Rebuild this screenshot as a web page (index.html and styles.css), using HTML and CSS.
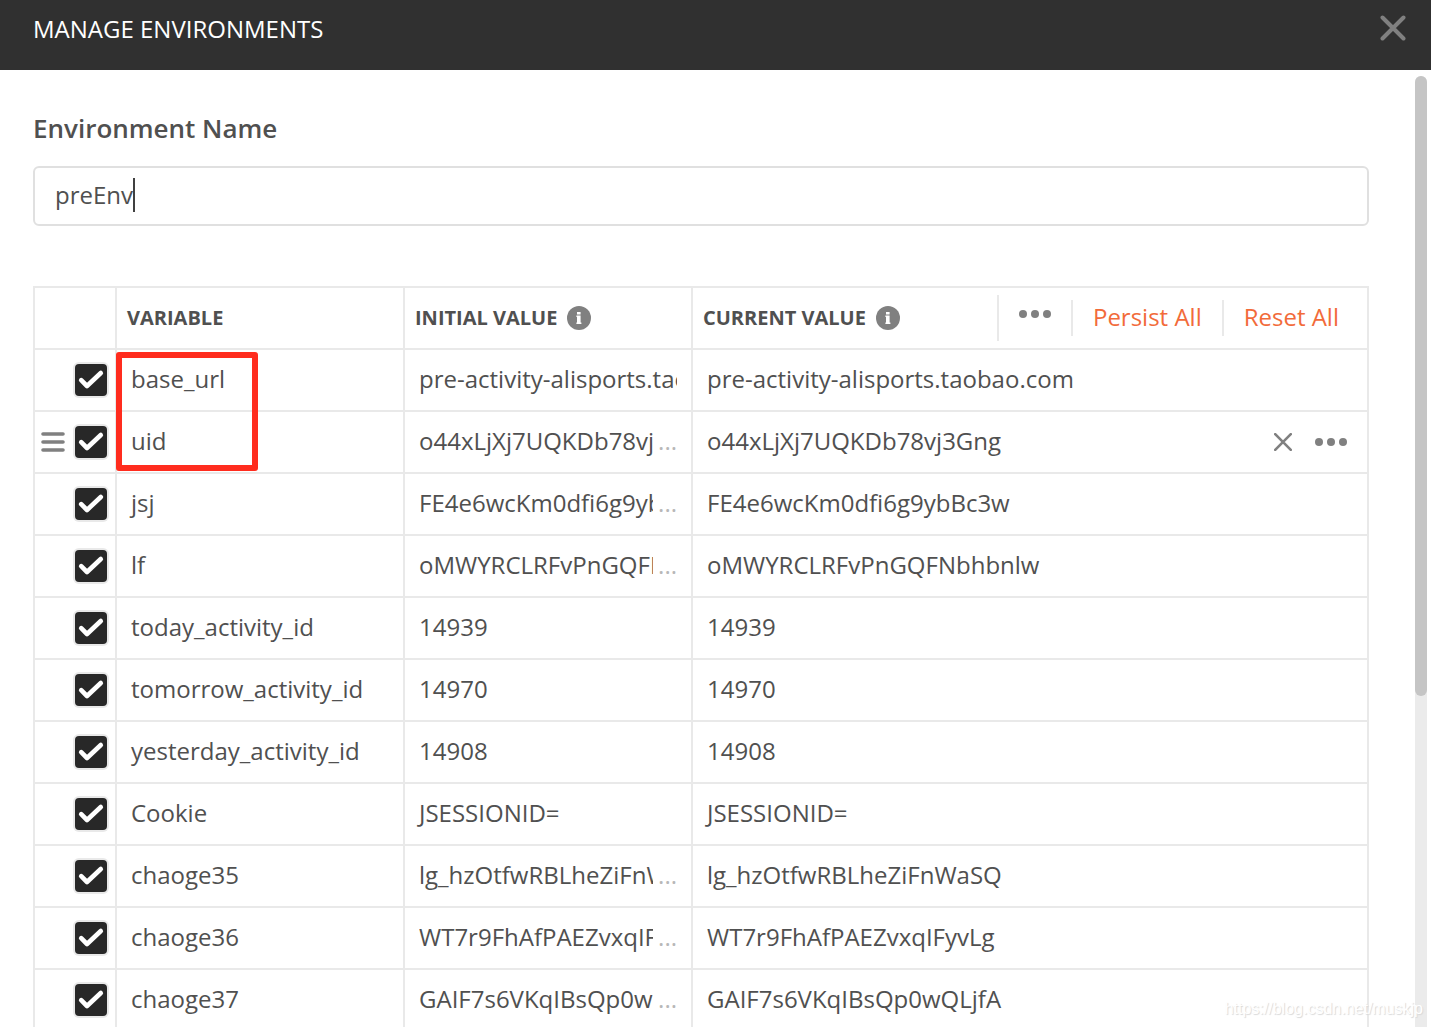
FILE: index.html
```html
<!DOCTYPE html>
<html lang="en">
<head>
<meta charset="utf-8">
<meta name="viewport" content="width=device-width, initial-scale=1">
<title>Manage Environments</title>
<link rel="stylesheet" href="styles.css">
</head>
<body>
<svg class="sprite" aria-hidden="true">
  <symbol id="info" viewBox="0 0 24 24"><circle cx="12" cy="12" r="12" fill="#808080"/><path d="M10 9.5h3.6v8.5h-3.6z M10 6h3.6v2.4h-3.6z M9.4 9.5h2v1.6h-2z M9.4 16.6h5v1.4h-5z" fill="#fff"/></symbol>
  <symbol id="dots" viewBox="0 0 32 8"><circle cx="4" cy="4" r="4"/><circle cx="16" cy="4" r="4"/><circle cx="28" cy="4" r="4"/></symbol>
</svg>
<main class="dialog">
  <header class="dialog-header">
    <h1 class="dialog-title">MANAGE ENVIRONMENTS</h1>
    <button class="icon-button" type="button" aria-label="Close">
      <svg width="26" height="26" viewBox="0 0 26 26" class="stroke-icon"><path d="M2.5 2.5l21 21M23.5 2.5l-21 21" stroke-width="4"/></svg>
    </button>
  </header>
  <div class="dialog-body">
    <div class="content">
      <label class="field-label" for="env-name">Environment Name</label>
      <div class="field">
        <input class="field-input" id="env-name" type="text" value="preEnv">
        <span class="caret"></span>
      </div>
      <div class="table-wrap">
        <table class="variables">
          <colgroup><col class="col-select"><col class="col-value"><col class="col-value"><col></colgroup>
          <thead>
            <tr>
              <th></th>
              <th scope="col">VARIABLE</th>
              <th scope="col"><div class="heading">INITIAL VALUE <svg class="info"><use href="#info"/></svg></div></th>
              <th scope="col">
                <div class="heading">CURRENT VALUE <svg class="info"><use href="#info"/></svg>
                  <div class="actions">
                    <button class="more-button" type="button" aria-label="More"><svg class="dots"><use href="#dots"/></svg></button>
                    <button class="text-button" type="button">Persist All</button>
                    <button class="text-button" type="button">Reset All</button>
                  </div>
                </div>
              </th>
            </tr>
          </thead>
          <tbody>
            <tr><td><div class="select"><input type="checkbox" checked aria-label="base_url"></div></td><td>base_url</td><td><div class="clip">pre-activity-alisports.taobao.com</div></td><td>pre-activity-alisports.taobao.com</td></tr>
            <tr><td><div class="select"><svg class="stroke-icon" width="24" height="20" viewBox="0 0 24 20"><path d="M2 2h20M2 10h20M2 18h20" stroke-width="3.6"/></svg><input type="checkbox" checked aria-label="uid"></div></td><td>uid</td><td><div class="clip more"><span>o44xLjXj7UQKDb78vj3Gng</span></div></td><td>
              <div class="row-value">o44xLjXj7UQKDb78vj3Gng
                <div class="row-actions">
                  <button class="icon-button" type="button" aria-label="Delete"><svg class="stroke-icon" width="18" height="18" viewBox="0 0 18 18"><path d="M1.2 1.2l15.6 15.6M16.8 1.2L1.2 16.8" stroke-width="2.6"/></svg></button>
                  <button class="icon-button" type="button" aria-label="More"><svg class="dots"><use href="#dots"/></svg></button>
                </div>
              </div></td></tr>
            <tr><td><div class="select"><input type="checkbox" checked aria-label="jsj"></div></td><td>jsj</td><td><div class="clip more"><span>FE4e6wcKm0dfi6g9ybBc3w</span></div></td><td>FE4e6wcKm0dfi6g9ybBc3w</td></tr>
            <tr><td><div class="select"><input type="checkbox" checked aria-label="lf"></div></td><td>lf</td><td><div class="clip more"><span>oMWYRCLRFvPnGQFNbhbnlw</span></div></td><td>oMWYRCLRFvPnGQFNbhbnlw</td></tr>
            <tr><td><div class="select"><input type="checkbox" checked aria-label="today_activity_id"></div></td><td>today_activity_id</td><td>14939</td><td>14939</td></tr>
            <tr><td><div class="select"><input type="checkbox" checked aria-label="tomorrow_activity_id"></div></td><td>tomorrow_activity_id</td><td>14970</td><td>14970</td></tr>
            <tr><td><div class="select"><input type="checkbox" checked aria-label="yesterday_activity_id"></div></td><td>yesterday_activity_id</td><td>14908</td><td>14908</td></tr>
            <tr><td><div class="select"><input type="checkbox" checked aria-label="Cookie"></div></td><td>Cookie</td><td>JSESSIONID=</td><td>JSESSIONID=</td></tr>
            <tr><td><div class="select"><input type="checkbox" checked aria-label="chaoge35"></div></td><td>chaoge35</td><td><div class="clip more"><span>lg_hzOtfwRBLheZiFnWaSQ</span></div></td><td>lg_hzOtfwRBLheZiFnWaSQ</td></tr>
            <tr><td><div class="select"><input type="checkbox" checked aria-label="chaoge36"></div></td><td>chaoge36</td><td><div class="clip more"><span>WT7r9FhAfPAEZvxqIFyvLg</span></div></td><td>WT7r9FhAfPAEZvxqIFyvLg</td></tr>
            <tr><td><div class="select"><input type="checkbox" checked aria-label="chaoge37"></div></td><td>chaoge37</td><td><div class="clip more"><span>GAIF7s6VKqIBsQp0wQLjfA</span></div></td><td>GAIF7s6VKqIBsQp0wQLjfA</td></tr>
          </tbody>
        </table>
        <div class="highlight"></div>
      </div>
    </div>
    <div class="scrollbar"><div class="scroll-thumb"></div></div>
  </div>
  <div class="watermark">https://blog.csdn.net/muskjp</div>
</main>
</body>
</html>
```
FILE: styles.css
```css
* { box-sizing: border-box; }

body {
  margin: 0;
  background: #fff;
  color: #505050;
  font-family: "Open Sans", "Noto Sans", sans-serif;
  font-size: 24px;
  line-height: 34px;
}

button {
  padding: 0;
  border: 0;
  background: none;
  font: inherit;
  cursor: pointer;
}

svg { display: block; }

.sprite {
  position: absolute;
  width: 0;
  height: 0;
}

.stroke-icon {
  fill: none;
  stroke: #808080;
  stroke-linecap: round;
}

.dialog {
  position: relative;
  display: flex;
  flex-direction: column;
  height: 100vh;
  overflow: hidden;
}

.dialog-header {
  display: flex;
  flex: none;
  align-items: flex-start;
  justify-content: space-between;
  height: 70px;
  padding: 12px 25px 0 33px;
  background: #303030;
}

.dialog-title {
  margin: 0;
  color: #fff;
  font-size: 24px;
  font-weight: 400;
}

.icon-button { display: block; }

.dialog-header .icon-button { padding-top: 3px; }

.dialog-body {
  display: flex;
  flex: 1;
  min-height: 0;
}

.content {
  flex: 1;
  min-width: 0;
  padding: 40px 46px 0 33px;
}

.field-label {
  display: block;
  margin-bottom: 20px;
  font-size: 26px;
  font-weight: 600;
  line-height: 36px;
}

.field { position: relative; }

.field-input {
  display: block;
  width: 100%;
  height: 60px;
  padding: 0 20px 4px;
  border: 2px solid #e0e0e0;
  border-radius: 6px;
  outline: 0;
  background: #fff;
  color: inherit;
  font: inherit;
}

.caret {
  position: absolute;
  top: 12px;
  left: 100px;
  width: 2px;
  height: 34px;
  background: #404040;
}

.table-wrap {
  position: relative;
  margin-top: 60px;
}

.variables {
  width: 100%;
  border-collapse: collapse;
  table-layout: fixed;
}

.col-select { width: 82px; }
.col-value { width: 288px; }

.variables th,
.variables td {
  height: 62px;
  padding: 0 14px 2px;
  border: 2px solid #e9e9e9;
  text-align: left;
  white-space: nowrap;
}

.variables th {
  padding: 0 8px 0 10px;
  font-size: 20px;
  font-weight: 700;
}

.variables td:first-child { padding: 0 8px 0 6px; }

.heading {
  display: flex;
  align-items: center;
  gap: 10px;
}

.info {
  width: 24px;
  height: 24px;
}

.dots {
  width: 32px;
  height: 8px;
  fill: #808080;
}

.actions {
  display: flex;
  align-items: center;
  margin-left: auto;
}

.more-button {
  height: 46px;
  padding: 0 20px 8px;
  border-left: 2px solid #e9e9e9;
}

.text-button {
  height: 36px;
  padding: 0 20px 2px;
  border-left: 2px solid #e9e9e9;
  color: #f26b3a;
  font-size: 24px;
  font-weight: 400;
  line-height: 34px;
}

.select {
  display: flex;
  align-items: center;
  justify-content: flex-end;
  gap: 10px;
}

.select input {
  width: 32px;
  height: 32px;
  margin: 0;
  border-radius: 4px;
  appearance: none;
  background: #282828;
  box-shadow: 0 0 0 2px #e9e9e9;
}

.select input:checked {
  background-image: url("data:image/svg+xml,%3Csvg xmlns='http://www.w3.org/2000/svg' viewBox='0 0 32 32'%3E%3Cpath d='M6.2 16.2l5.8 5.8L25.8 9' fill='none' stroke='white' stroke-width='4.6' stroke-linecap='round' stroke-linejoin='round'/%3E%3C/svg%3E");
}

.clip { overflow: hidden; }

.clip.more {
  display: flex;
  gap: 5px;
}

.clip.more span {
  flex: 1;
  min-width: 0;
  overflow: hidden;
}

.clip.more::after {
  content: "...";
  color: #b8b8b8;
}

.row-value,
.row-actions {
  display: flex;
  align-items: center;
  justify-content: space-between;
}

.row-actions {
  gap: 23px;
  padding: 2px 6px 0 0;
}

.highlight {
  position: absolute;
  top: 66px;
  left: 83px;
  width: 142px;
  height: 119px;
  border: 6px solid #ff2c1e;
  border-radius: 3px;
}

.scrollbar {
  flex: none;
  width: 12px;
  margin: 6px 4px 0 0;
  border-radius: 6px 6px 0 0;
  background: #ebebeb;
}

.scroll-thumb {
  height: 65.2%;
  border-radius: 6px;
  background: #c5c5c5;
}

.watermark {
  position: absolute;
  right: 8px;
  bottom: 8px;
  color: #fff;
  font-family: "Liberation Sans", Arial, sans-serif;
  font-size: 16px;
  line-height: 20px;
  text-shadow: 1px 1px 1px #d8d8d8;
}
```
